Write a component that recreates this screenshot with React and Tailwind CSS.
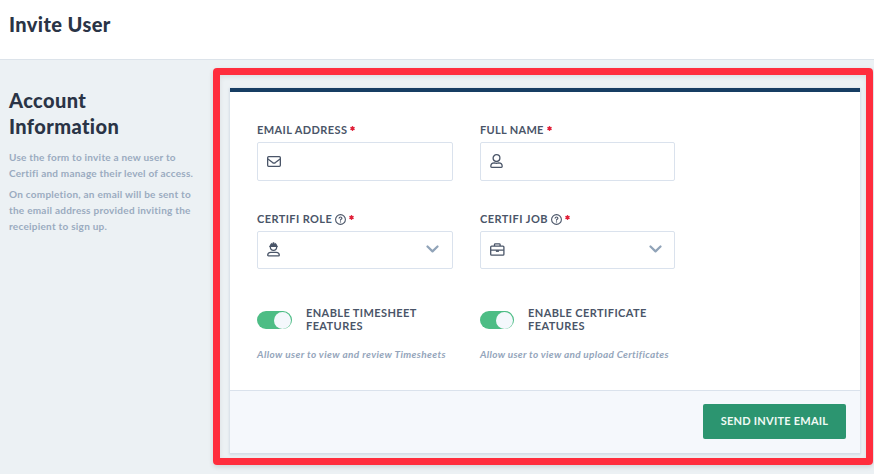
import { useState } from 'react';

const FONT = "font-['Lato','Open_Sans',sans-serif]";

function MailIcon() {
  return (
    <svg width="14" height="11" viewBox="0 0 14 11" fill="none" stroke="#4a5568" strokeWidth="1.3" strokeLinejoin="round">
      <rect x="0.65" y="0.65" width="12.7" height="9.7" rx="1" />
      <path d="M0.9 3 5.6 6.6Q7 7.6 8.4 6.6L13.1 3" />
    </svg>
  );
}

function UserIcon() {
  return (
    <svg width="13" height="14" viewBox="0 0 13 14" fill="none" stroke="#4a5568" strokeWidth="1.3" strokeLinejoin="round">
      <circle cx="6.5" cy="4.1" r="3.4" />
      <path d="M4.2 8.9Q6.5 9.7 8.8 8.9Q12.1 9.1 12.2 12.3Q12.2 13.3 11.3 13.3H1.7Q0.8 13.3 0.8 12.3Q0.9 9.1 4.2 8.9Z" />
    </svg>
  );
}

function WorkerIcon() {
  return (
    <svg width="13" height="15" viewBox="0 0 13 15" fill="none" stroke="#4a5568" strokeWidth="1.3" strokeLinejoin="round">
      <path d="M2.2 5V3.8H2.8Q3 1.5 5 .7L5.5 2 5.8.2H7.2L7.5 2 8 .7Q10 1.5 10.2 3.8H10.8V5Z" fill="#4a5568" stroke="none" />
      <path d="M3.3 5Q3.5 8.3 6.5 8.3T9.7 5" />
      <path d="M3.7 10.4H9.3Q12.2 10.6 12.3 13Q12.3 13.9 11.5 13.9H1.5Q.7 13.9 .7 13Q.8 10.6 3.7 10.4Z" />
    </svg>
  );
}

function BriefcaseIcon() {
  return (
    <svg width="15" height="13" viewBox="0 0 15 13" fill="none" stroke="#4a5568" strokeWidth="1.3" strokeLinejoin="round">
      <rect x="0.7" y="3.1" width="13.2" height="9.1" rx="1" />
      <path d="M4.5 3V1.6Q4.5.8 5.3.8H9.3Q10.1.8 10.1 1.6V3M1 7.2H13.8" />
      <path d="M5.9 7.2H8.9V8.9H5.9Z" fill="#4a5568" stroke="none" />
    </svg>
  );
}

function HelpIcon() {
  return (
    <svg width="11" height="11" viewBox="0 0 11 11" fill="none" stroke="#4a5568" strokeWidth="1.1" strokeLinecap="round">
      <circle cx="5.5" cy="5.5" r="4.9" />
      <path d="M4.1 4.2Q4.3 3 5.5 3T6.9 4.2Q6.9 4.9 6.1 5.3T5.5 6.2" />
      <circle cx="5.5" cy="7.9" r="0.7" fill="#4a5568" stroke="none" />
    </svg>
  );
}

function Chevron() {
  return (
    <svg width="13" height="9" viewBox="0 0 13 9" fill="none" stroke="#90a3b8" strokeWidth="2.2" strokeLinecap="round" strokeLinejoin="round">
      <path d="M1.5 1.5 6.5 6.4 11.5 1.5" />
    </svg>
  );
}

function Label({ children, help, className }) {
  return (
    <div className="flex h-4 items-center whitespace-nowrap text-[11px] font-bold leading-4 text-[#4a5568]">
      <span className={className}>{children}</span>
      {help && <span className="ml-[3px]"><HelpIcon /></span>}
      <svg width="5" height="5" viewBox="0 0 5 5" className="mb-1 ml-[3px]" stroke="#e01e37" strokeWidth="1.5" strokeLinecap="round">
        <path d="M2.5 .8V4.2M1 1.6 4 3.4M4 1.6 1 3.4" />
      </svg>
    </div>
  );
}

function Toggle({ on, onChange, label, className, widthClass }) {
  return (
    <div className="flex h-[26px] items-start">
      <button
        role="switch"
        aria-checked={on}
        aria-label={label}
        onClick={onChange}
        className={`mt-1 flex h-[18px] shrink-0 items-center rounded-full px-px ${widthClass} ${on ? 'justify-end bg-[#4dbd85]' : 'justify-start bg-[#cbd5e0]'}`}
      >
        <span className="size-[17px] rounded-full bg-[#f4f8fc]" />
      </button>
      <div className={`-mt-px whitespace-nowrap text-[11px] font-bold leading-[13px] text-[#4a5568] ${className}`}>
        {label}<br />FEATURES
      </div>
    </div>
  );
}

export default function App() {
  const [timesheets, setTimesheets] = useState(true);
  const [certificates, setCertificates] = useState(true);

  return (
    <div className={`flex h-[474px] w-[874px] flex-col overflow-hidden bg-[#ecf1f4] ${FONT}`}>
      <header className="h-[60px] shrink-0 border-b border-[#dce3ea] bg-white pl-[9px] pt-[10px]">
        <h1 className="text-[20px] font-black leading-7 tracking-[0.4px] text-[#2a3446]">Invite User</h1>
      </header>

      <main className="flex flex-1">
        <aside className="w-[213px] shrink-0 pl-[9px] pt-[27px]">
          <h2 className="text-[20px] font-black leading-[26px] tracking-[0.4px] text-[#2a3446]">
            Account<br />Information
          </h2>
          <div className="mt-[10px] whitespace-nowrap text-[10px] font-bold leading-4 text-[#9aabc0]">
            <p className="tracking-[0.22px]">Use the form to invite a new user to<br />Certifi and manage their level of access.</p>
            <p className="mt-[5px] tracking-[0.25px]">On completion, an email will be sent to<br />the email address provided inviting the<br />receipient to sign up.</p>
          </div>
        </aside>

        {/* Highlighted form panel */}
        <div className="mt-2 h-[397px] w-[660px] rounded-[4px] border-[7px] border-[#ff2d3d] px-[10px] pt-[13px] shadow-[0_2px_5px_rgba(0,0,0,0.12),inset_0_2px_5px_rgba(0,0,0,0.08)]">
          <div className="flex h-[365px] w-[630px] flex-col border-t-4 border-[#173d63] bg-white shadow-[0_1px_2px_1px_#d5dde7]">
            <div className="grid h-[298px] grid-cols-[196px_195px] content-start gap-x-[27px] pl-[27px] pt-[30px]">
              <div className="h-[89px]">
                <Label className="tracking-[0.4px]">EMAIL ADDRESS</Label>
                <div className="mt-1 flex h-[39px] items-center rounded-[2px] border border-[#dae2ed] pl-[9px]"><MailIcon /></div>
              </div>
              <div className="h-[89px]">
                <Label className="tracking-[0.3px]">FULL NAME</Label>
                <div className="mt-1 flex h-[39px] items-center rounded-[2px] border border-[#dae2ed] pb-px pl-[9px]"><UserIcon /></div>
              </div>
              <div className="h-[94px]">
                <Label help className="tracking-[0.4px]">CERTIFI ROLE</Label>
                <div className="mt-1 flex h-[38px] items-center justify-between rounded-[2px] border border-[#dae2ed] pb-px pl-[9px] pr-[13px]"><WorkerIcon /><Chevron /></div>
              </div>
              <div className="h-[94px]">
                <Label help className="tracking-[0.45px]">CERTIFI JOB</Label>
                <div className="mt-1 flex h-[38px] items-center justify-between rounded-[2px] border border-[#dae2ed] pb-px pl-[9px] pr-[12px]"><BriefcaseIcon /><Chevron /></div>
              </div>
              <div className="pt-[2px]">
                <Toggle on={timesheets} onChange={() => setTimesheets(!timesheets)} label="ENABLE TIMESHEET" widthClass="w-[35px]" className="ml-[14px] tracking-[0.4px]" />
                <p className="mt-[13px] whitespace-nowrap text-[10px] font-bold italic leading-4 tracking-[0.39px] text-[#94a5bb]">Allow user to view and review Timesheets</p>
              </div>
              <div className="pt-[2px]">
                <Toggle on={certificates} onChange={() => setCertificates(!certificates)} label="ENABLE CERTIFICATE" widthClass="w-[34px]" className="ml-[14px] tracking-[0.42px]" />
                <p className="mt-[13px] whitespace-nowrap text-[10px] font-bold italic leading-4 tracking-[0.31px] text-[#94a5bb]">Allow user to view and upload Certificates</p>
              </div>
            </div>
            <footer className="flex flex-1 justify-end border-t border-[#dae2ec] bg-[#f5f8fc] pr-[14px] pt-[13px]">
              <button className="h-[35px] w-[143px] whitespace-nowrap rounded-[2px] bg-[#2c9570] text-[11px] font-bold tracking-[0.25px] text-[#f0faf5]">SEND INVITE EMAIL</button>
            </footer>
          </div>
        </div>
      </main>
    </div>
  );
}
